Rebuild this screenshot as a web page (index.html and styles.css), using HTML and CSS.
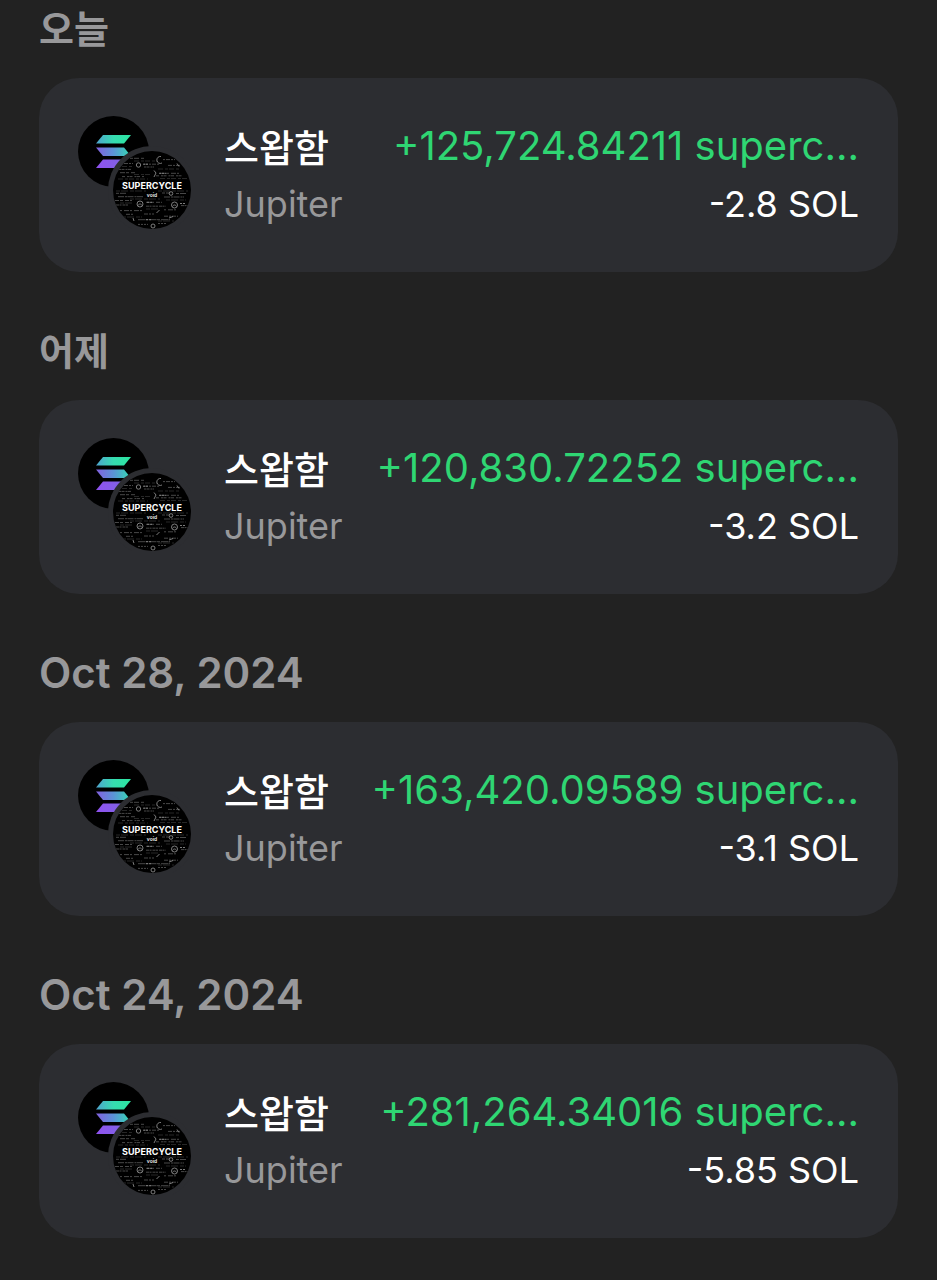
FILE: index.html
```html
<!DOCTYPE html>
<html lang="ko">

<head>
  <meta charset="UTF-8">
  <meta name="viewport" content="width=device-width, initial-scale=1.0">
  <title>Activity</title>
  <link rel="stylesheet" href="styles.css">
</head>

<body>
  <!-- shared token icons -->
  <svg class="icon-defs" width="0" height="0" aria-hidden="true">
    <defs>
      <linearGradient id="sol-top" x1="0" y1="0" x2="1" y2="0">
        <stop offset="0" stop-color="#4fa3cf" />
        <stop offset="0.5" stop-color="#36dcb0" />
        <stop offset="1" stop-color="#2be6a0" />
      </linearGradient>
      <linearGradient id="sol-mid" x1="0" y1="0" x2="1" y2="0">
        <stop offset="0" stop-color="#8360e0" />
        <stop offset="0.5" stop-color="#5b93d6" />
        <stop offset="1" stop-color="#32dcb2" />
      </linearGradient>
      <linearGradient id="sol-bottom" x1="0" y1="0" x2="1" y2="0">
        <stop offset="0" stop-color="#9052f0" />
        <stop offset="1" stop-color="#7a68e0" />
      </linearGradient>
      <clipPath id="coin-clip">
        <circle cx="74" cy="74" r="39" />
      </clipPath>
    </defs>
    <symbol id="swap-icon" viewBox="0 0 113 113">
      <circle cx="35.5" cy="35.5" r="35.5" fill="#000" />
      <path d="M25 19h28l-7 8.500H18z" fill="url(#sol-top)" />
      <path d="M18 31.500h28l7 8.500H25z" fill="url(#sol-mid)" />
      <path d="M25 43.500h28l-7 8.500H18z" fill="url(#sol-bottom)" />
      <circle cx="74" cy="74" r="44" fill="#2c2d31" />
      <circle cx="74" cy="74" r="39" fill="#000" />
      <g clip-path="url(#coin-clip)" fill="none">
        <g stroke="#5a5a5a" stroke-width="0.8">
          <path d="M52 42.300h14" stroke-dasharray="3 1 5 2" />
          <path d="M85 43.600h12" stroke-dasharray="2 1 4 1" />
          <path d="M46 47.500h9M66 48.200h16M90 49.400h12" stroke-dasharray="4 1 2 1" />
          <path d="M66 51h10M41 53.400h12" stroke-dasharray="2 .5 3 1" />
          <path d="M42 56.700h15M82 57.300h19" stroke-dasharray="5 1 3 2" />
          <path d="M44 60.600h22M78 59.800h26" stroke-dasharray="3 2 2 .5" />
          <path d="M38 77.300h12M84 77h8M98 77.500h12" stroke-dasharray="3 1 6 2" />
          <path d="M40 80.700h26M86 81h20" stroke-dasharray="6 1 2 .5" />
          <path d="M37 84.500h17M68 86.300h16" stroke-dasharray="4 1 3 2" />
          <path d="M38 89h13M68 90.200h20M103 89.600h9" stroke-dasharray="3 .5 2 1" />
          <path d="M42 94.600h22M86 93.800h14" stroke-dasharray="2 2 5 1" />
          <path d="M48 98.300h8M66 98h10M86 100.200h14" stroke-dasharray="4 1 2 1" />
          <path d="M60 103.700h32" stroke-dasharray="7 .5 3 1" />
          <path d="M60 108.400h10M80 107.500h9" stroke-dasharray="2 1" />
        </g>
        <g stroke="#303030" stroke-width="0.8">
          <path d="M56 45h24M44 50.500h10M80 53h22M56 58.500h18M40 63h30M82 62.500h28" stroke-dasharray="5 2 3 1" />
          <path d="M38 75h30M80 75h30M52 83h30M88 84h20M42 87h12M68 93h12M44 101h20M80 105h16" stroke-dasharray="4 1 7 2" />
        </g>
        <g stroke="#8a8a8a" stroke-width="0.9">
          <circle cx="60.500" cy="49" r="2.200" />
          <path d="M83 40.500a3.500 3.500 0 1 0 1 6.500M76 54.500l2 2.500-2 4M99 47.500l2 3" />
          <circle cx="93" cy="77.500" r="1.800" />
          <circle cx="62" cy="88" r="3" />
          <path d="M60 89.500c1-2 3-2 4 0" />
          <circle cx="96.500" cy="89" r="3" />
          <path d="M94.500 90.500c1-2 3-2 4 0" />
          <path d="M78.500 97l3-3M91 102l4-1.500M55 102l1 3" />
          <circle cx="75" cy="110" r="2" />
          <path d="M65 48.200h6M81 57.300h7M69 86.300h6M68 103.700h6M102 87.500h5" stroke-dasharray="2 1" />
        </g>
        <path d="M43 64h62v9H43z" fill="#000" />
      </g>
    </symbol>
  </svg>

  <main class="activity">
    <section class="day">
      <h2 class="day-title day-title-ko">오늘</h2>
      <div class="card">
        <svg class="token-icon" viewBox="0 0 113 113">
          <use href="#swap-icon" />
          <text class="coin-name" x="74" y="73">SUPERCYCLE</text>
          <text class="coin-sub" x="74" y="81">void</text>
        </svg>
        <div class="info">
          <div class="action">스왑함</div>
          <div class="source">Jupiter</div>
        </div>
        <div class="amounts">
          <div class="received">+125,724.84211 superc...</div>
          <div class="sent">-2.8 SOL</div>
        </div>
      </div>
    </section>

    <section class="day">
      <h2 class="day-title day-title-ko">어제</h2>
      <div class="card">
        <svg class="token-icon" viewBox="0 0 113 113">
          <use href="#swap-icon" />
          <text class="coin-name" x="74" y="73">SUPERCYCLE</text>
          <text class="coin-sub" x="74" y="81">void</text>
        </svg>
        <div class="info">
          <div class="action">스왑함</div>
          <div class="source">Jupiter</div>
        </div>
        <div class="amounts">
          <div class="received">+120,830.72252 superc...</div>
          <div class="sent">-3.2 SOL</div>
        </div>
      </div>
    </section>

    <section class="day">
      <h2 class="day-title">Oct 28, 2024</h2>
      <div class="card">
        <svg class="token-icon" viewBox="0 0 113 113">
          <use href="#swap-icon" />
          <text class="coin-name" x="74" y="73">SUPERCYCLE</text>
          <text class="coin-sub" x="74" y="81">void</text>
        </svg>
        <div class="info">
          <div class="action">스왑함</div>
          <div class="source">Jupiter</div>
        </div>
        <div class="amounts">
          <div class="received">+163,420.09589 superc...</div>
          <div class="sent">-3.1 SOL</div>
        </div>
      </div>
    </section>

    <section class="day">
      <h2 class="day-title">Oct 24, 2024</h2>
      <div class="card">
        <svg class="token-icon" viewBox="0 0 113 113">
          <use href="#swap-icon" />
          <text class="coin-name" x="74" y="73">SUPERCYCLE</text>
          <text class="coin-sub" x="74" y="81">void</text>
        </svg>
        <div class="info">
          <div class="action">스왑함</div>
          <div class="source">Jupiter</div>
        </div>
        <div class="amounts">
          <div class="received">+281,264.34016 superc...</div>
          <div class="sent">-5.85 SOL</div>
        </div>
      </div>
    </section>
  </main>
</body>

</html>
```
FILE: styles.css
```css
body {
  margin: 0;
  padding: 0;
  font-family: Inter, "Noto Sans CJK KR", sans-serif;
  background-color: #222222;
  color: #fff;
}

.icon-defs {
  position: absolute;
}

.activity {
  display: flex;
  flex-direction: column;
  gap: 54px;
  padding: 4px 39px 42px;
}

.day-title {
  margin: 0 0 24px;
  font-size: 42px;
  font-weight: 600;
  line-height: 50px;
  color: #98989a;
}

.day-title-ko {
  font-size: 38px;
}

.card {
  display: flex;
  align-items: flex-start;
  padding: 38px 39px 39px;
  background-color: #2c2d31;
  border-radius: 40px;
}

.token-icon {
  flex: none;
  width: 113px;
  height: 113px;
  margin-right: 33px;
}

.coin-name {
  font-size: 9px;
  font-weight: 700;
  text-anchor: middle;
  fill: #fff;
}

.coin-sub {
  font-size: 5px;
  font-weight: 700;
  text-anchor: middle;
  fill: #ddd;
}

.info {
  flex: none;
  padding-top: 1px;
}

.action {
  font-size: 38px;
  font-weight: 500;
  line-height: 62px;
}

.source {
  font-size: 36px;
  line-height: 50px;
  color: #98989a;
}

.amounts {
  flex: 1;
  min-width: 0;
  padding-top: 1px;
  text-align: right;
  font-size: 36px;
  line-height: 58px;
  white-space: nowrap;
}

.received {
  font-size: 40px;
  color: #2fd673;
}
```
